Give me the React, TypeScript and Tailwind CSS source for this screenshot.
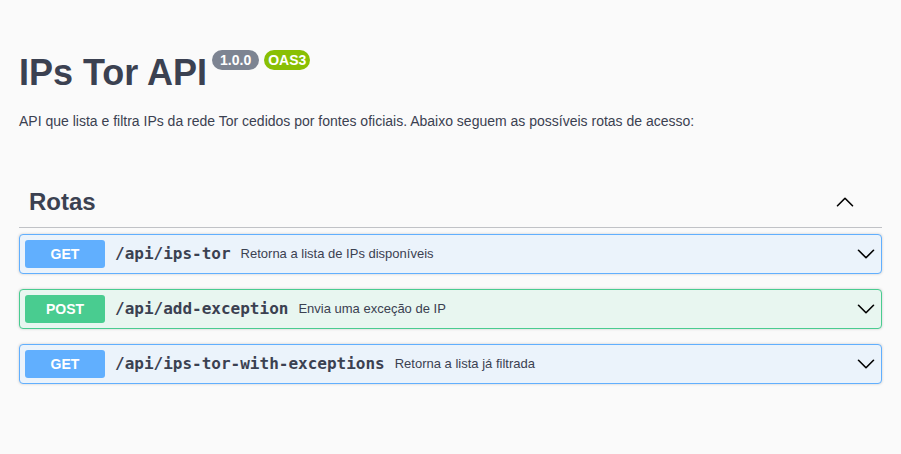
import { ChevronDown, ChevronUp } from 'lucide-react';

type Route = {
    method: 'GET' | 'POST';
    path: string;
    summary: string;
};

const routes: Route[] = [
    { method: 'GET', path: '/api/ips-tor', summary: 'Retorna a lista de IPs disponíveis' },
    { method: 'POST', path: '/api/add-exception', summary: 'Envia uma exceção de IP' },
    { method: 'GET', path: '/api/ips-tor-with-exceptions', summary: 'Retorna a lista já filtrada' },
];

function OpBlock({ route }: { route: Route }) {
    const isPost = route.method === 'POST';
    return (
        <div
            className={`mb-[15px] flex h-[40px] items-center rounded border pl-[5px] shadow-[0_0_3px_rgba(0,0,0,0.19)] ${isPost ? 'border-[#49cc90] bg-[#e8f6f0]' : 'border-[#61affe] bg-[#ebf3fb]'
                }`}
        >
            <span
                className={`flex h-[28px] w-[80px] items-center justify-center rounded-[3px] text-[14px] font-bold text-white ${isPost ? 'bg-[#49cc90]' : 'bg-[#61affe]'
                    }`}
            >
                {route.method}
            </span>
            <span className="ml-[10px] font-['DejaVu_Sans_Mono',monospace] text-[16px] font-bold text-[#3b4151]">
                {route.path}
            </span>
            <span className="ml-[10px] flex-1 text-[13px] text-[#3b4151]">{route.summary}</span>
            <ChevronDown className="h-[30px] w-[30px] text-black" strokeWidth={1.3} />
        </div>
    );
}

export default function App() {
    return (
        <div className="min-h-[454px] bg-[#fafafa] font-['Liberation_Sans',Arial,sans-serif] text-[#3b4151]">
            <div className="px-[19px] pt-[50px]">
                <div className="flex items-start">
                    <h2 className="text-[36px] font-bold leading-[45px]">IPs Tor API</h2>
                    <span className="ml-[5px] rounded-full bg-[#7d8492] px-[8px] py-[2px] text-[14px] font-bold leading-[16px] text-white">
                        1.0.0
                    </span>
                    <span className="ml-[5px] rounded-full bg-[#89bf04] px-[4px] py-[2px] text-[14px] font-bold leading-[16px] text-white">
                        OAS3
                    </span>
                </div>
                <p className="mt-[16px] text-[14px]">
                    API que lista e filtra IPs da rede Tor cedidos por fontes oficiais. Abaixo seguem as possíveis rotas de acesso:
                </p>

                <div className="mt-[42px]">
                    <div className="mb-[6px] flex items-center border-b border-[rgba(59,65,81,0.3)] px-[10px] pb-[7px] pt-[10px]">
                        <h3 className="flex-1 text-[24px] font-bold">Rotas</h3>
                        <ChevronUp className="mr-[12px] h-[30px] w-[30px] text-black" strokeWidth={1.3} />
                    </div>
                    {routes.map((r) => (
                        <OpBlock key={r.path} route={r} />
                    ))}
                </div>
            </div>
        </div>
    );
}
